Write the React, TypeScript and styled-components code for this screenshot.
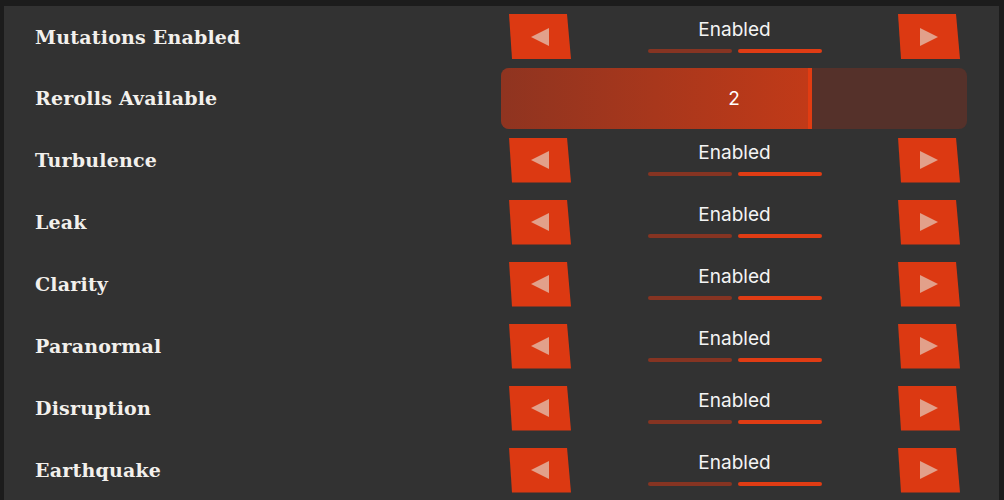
import React from "react"
import styled, { createGlobalStyle } from "styled-components"

const Global = createGlobalStyle`
    html, body {
        margin: 0;
        background: #1c1c1c;
        overflow: hidden;
    }
`

const Page = styled.div`
    width: 1004px;
    height: 500px;
    padding: 6px 5px 0 4px;
    box-sizing: border-box;
`

const Panel = styled.div`
    background: #323232;
    height: 494px;
    display: flex;
    flex-direction: column;
`

const Row = styled.div`
    display: grid;
    grid-template-columns: 497px 466px;
    align-items: center;
    height: 62px;
    flex-shrink: 0;

    &:first-child {
        height: 61px;
    }
`

const Label = styled.div`
    padding-left: 31px;
    color: #f2f0ec;
    font-family: "DejaVu Serif", "Liberation Serif", serif;
    font-weight: bold;
    font-size: 19px;
    letter-spacing: 0.2px;
`

const Toggle = styled.div`
    display: flex;
    align-items: center;
    justify-content: space-between;
    padding: 0 7px 0 8px;
`

const ArrowButton = styled.button`
    width: 62px;
    height: 45px;
    border: none;
    padding: 0;
    background: #dc3912;
    clip-path: polygon(0 0, 58px 0, 62px 45px, 3px 45px);
    display: flex;
    align-items: center;
    justify-content: center;
    cursor: pointer;
`

const Middle = styled.div`
    display: flex;
    flex-direction: column;
    align-items: center;
    margin-top: -3px;
`

const Value = styled.div`
    color: #f4f4f4;
    font-family: Inter, "Noto Sans", sans-serif;
    font-size: 19px;
    line-height: 24px;
`

const Bars = styled.div`
    display: flex;
    gap: 6px;
    margin-top: 7px;
`

const Bar = styled.div<{ $on: boolean }>`
    width: 84px;
    height: 4px;
    border-radius: 2px;
    background: ${(p) => (p.$on ? "#e03c14" : "#863422")};
`

const Slider = styled.div`
    position: relative;
    height: 61px;
    border-radius: 8px;
    background: #55312a;
    overflow: hidden;
    display: flex;
    align-items: center;
    justify-content: center;
`

const Fill = styled.div`
    position: absolute;
    left: 0;
    top: 0;
    bottom: 0;
    box-sizing: border-box;
    background: linear-gradient(90deg, #8f3420 0%, #c13a18 100%);
    border-right: 4px solid #e23c12;
`

const SliderValue = styled.span`
    position: relative;
    color: #fff;
    font-family: Inter, "Noto Sans", sans-serif;
    font-size: 19px;
`

const Triangle = ({ dir }: { dir: "left" | "right" }) => (
    <svg width="20" height="20" viewBox="0 0 20 20">
        {dir === "left" ? (
            <polygon points="1,10 19,1 19,19" fill="#e2a08a" />
        ) : (
            <polygon points="19,10 1,1 1,19" fill="#e2a08a" />
        )}
    </svg>
)

const rows = [
    "Mutations Enabled",
    "Rerolls Available",
    "Turbulence",
    "Leak",
    "Clarity",
    "Paranormal",
    "Disruption",
    "Earthquake",
]

const ToggleControl = () => (
    <Toggle>
        <ArrowButton>
            <Triangle dir="left" />
        </ArrowButton>
        <Middle>
            <Value>Enabled</Value>
            <Bars>
                <Bar $on={false} />
                <Bar $on={true} />
            </Bars>
        </Middle>
        <ArrowButton>
            <Triangle dir="right" />
        </ArrowButton>
    </Toggle>
)

const App = () => {
    const rerolls = 2
    const max = 3
    return (
        <Page>
            <Global />
            <Panel>
                {rows.map((name) => (
                    <Row key={name}>
                        <Label>{name}</Label>
                        {name === "Rerolls Available" ? (
                            <Slider>
                                <Fill style={{ width: `${(rerolls / max) * 100}%` }} />
                                <SliderValue>{rerolls}</SliderValue>
                            </Slider>
                        ) : (
                            <ToggleControl />
                        )}
                    </Row>
                ))}
            </Panel>
        </Page>
    )
}

export default App
